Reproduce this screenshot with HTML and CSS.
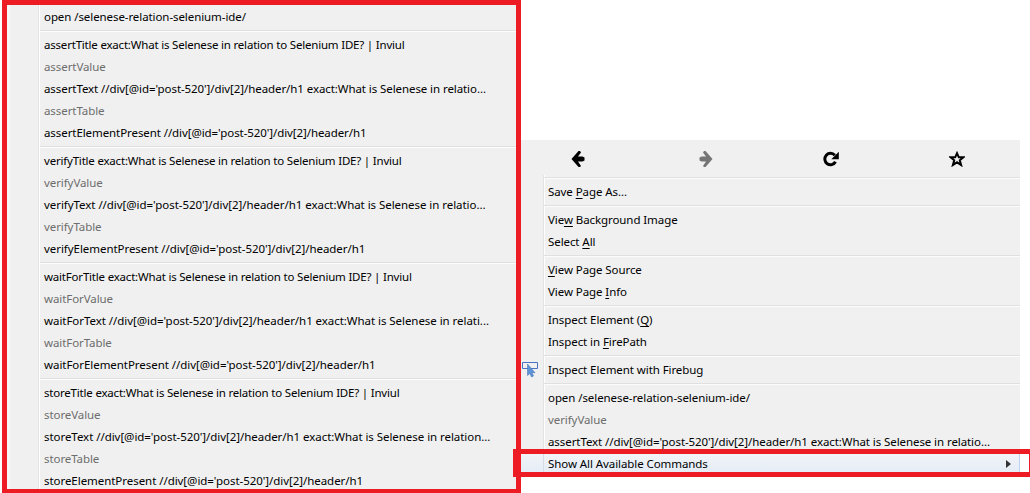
FILE: index.html
```html
<!DOCTYPE html>
<html lang="en">
<head>
<meta charset="utf-8">
<title>Context menu</title>
<link rel="stylesheet" href="styles.css">
</head>
<body>
<div class="page">
  <div class="panel">
    <div class="menu">
      <div class="row">open /selenese-relation-selenium-ide/</div>
      <div class="sep"></div>
      <div class="row title">assertTitle exact:What is Selenese in relation to Selenium IDE? | Inviul</div>
      <div class="row dim">assertValue</div>
      <div class="row">assertText //div[@id='post-520']/div[2]/header/h1 exact:What is Selenese in relatio...</div>
      <div class="row dim">assertTable</div>
      <div class="row">assertElementPresent //div[@id='post-520']/div[2]/header/h1</div>
      <div class="sep"></div>
      <div class="row title">verifyTitle exact:What is Selenese in relation to Selenium IDE? | Inviul</div>
      <div class="row dim">verifyValue</div>
      <div class="row wide">verifyText //div[@id='post-520']/div[2]/header/h1 exact:What is Selenese in relatio...</div>
      <div class="row dim">verifyTable</div>
      <div class="row wide">verifyElementPresent //div[@id='post-520']/div[2]/header/h1</div>
      <div class="sep"></div>
      <div class="row title">waitForTitle exact:What is Selenese in relation to Selenium IDE? | Inviul</div>
      <div class="row dim">waitForValue</div>
      <div class="row wide">waitForText //div[@id='post-520']/div[2]/header/h1 exact:What is Selenese in relati...</div>
      <div class="row dim">waitForTable</div>
      <div class="row wide">waitForElementPresent //div[@id='post-520']/div[2]/header/h1</div>
      <div class="sep"></div>
      <div class="row title">storeTitle exact:What is Selenese in relation to Selenium IDE? | Inviul</div>
      <div class="row dim">storeValue</div>
      <div class="row wide">storeText //div[@id='post-520']/div[2]/header/h1 exact:What is Selenese in relation...</div>
      <div class="row dim">storeTable</div>
      <div class="row wide">storeElementPresent //div[@id='post-520']/div[2]/header/h1</div>
    </div>
  </div>
  <div class="popup">
    <div class="toolbar">
      <svg class="tool" viewBox="0 0 16 16"><path d="M7.500 0 .5 8l7 8h1.500l1-1-3-4.500h4.500l2-1V6.500l-2-1H7L10 1.500 9 0z"/></svg>
      <svg class="tool off" viewBox="0 0 16 16"><path d="M8.500 0 15.500 8l-7 8H7l-1-1 3-4.500H4.500l-2-1V6.500l2-1H9L6 1.500 7 0z"/></svg>
      <svg class="tool" viewBox="0 0 16 16"><path class="ring" d="M12.500 10.800A5.700 5.700 0 1 1 11.800 4.300"/><path d="M15.800 .8V8.300H8.300z"/></svg>
      <svg class="tool" viewBox="0 0 16 16"><path class="star" d="M8 2.200 9.800 6.300H14.300L10.800 9.300 12.100 14 8 11.300 3.900 14 5.200 9.300 1.700 6.300H6.200z"/></svg>
    </div>
    <div class="menu short">
      <div class="sep first"></div>
      <div class="row">Save <u>P</u>age As...</div>
      <div class="sep"></div>
      <div class="row">Vie<u>w</u> Background Image</div>
      <div class="row">Select <u>A</u>ll</div>
      <div class="sep"></div>
      <div class="row"><u>V</u>iew Page Source</div>
      <div class="row">View Page <u>I</u>nfo</div>
      <div class="sep"></div>
      <div class="row">Inspect Element (<u>Q</u>)</div>
      <div class="row">Inspect in <u>F</u>irePath</div>
      <div class="sep"></div>
      <div class="row has-icon">
        <svg class="bug" viewBox="0 0 16 16"><path class="frame" d="M.5.5h15v6H.5z"/><path class="cursor" d="M5.500 2v11.500l2.500-2 1.500 3.500 2-1-1.500-3.300h3z"/></svg>
        Inspect Element with Firebug
      </div>
      <div class="sep"></div>
      <div class="row">open /selenese-relation-selenium-ide/</div>
      <div class="row dim">verifyValue</div>
      <div class="row">assertText //div[@id='post-520']/div[2]/header/h1 exact:What is Selenese in relatio...</div>
      <div class="row active">Show All Available Commands<span class="arrow"></span></div>
    </div>
  </div>
  <div class="callout"></div>
</div>
</body>
</html>
```
FILE: styles.css
```css
* { box-sizing: border-box; }
html, body { margin: 0; padding: 0; background: #fff; }
body { font-family: "Noto Sans", sans-serif; font-size: 11.5px; color: #000; }
.page { position: relative; width: 1030px; height: 493px; overflow: hidden; display: flex; align-items: flex-start; padding-left: 2px; }
.panel { width: 519px; height: 493px; border: 5px solid #ed1c24; border-bottom-width: 4px; overflow: hidden; background: #f0f0f0; flex: none; }
.menu { position: relative; padding-top: 1px; padding-left: 33px; background: linear-gradient(to right, #f7f7f7 0 3px, #f0f0f0 3px 31px, #e2e3e3 31px 32px, #fff 32px 33px, #f0f0f0 33px); }
.row { height: 22px; line-height: 22px; padding-left: 4px; white-space: nowrap; letter-spacing: -.08px; }
.row.title { letter-spacing: -.2px; }
.row.wide { letter-spacing: -.05px; }
.dim { color: #6d6d6d; }
.sep { height: 6px; padding: 2px 0; }
.sep::before { content: ""; display: block; height: 2px; background: linear-gradient(#e0e0e0 0 1px, #fcfcfc 1px); }
u { text-underline-offset: 2px; }
.popup { width: 499px; margin-top: 140px; background: #f0f0f0; flex: none; }
.toolbar { height: 37px; display: grid; grid-template-columns: repeat(4, 126px); margin-left: -5px; align-items: center; justify-items: center; }
.tool { width: 16px; height: 16px; fill: #000; }
.off { fill: #757575; }
.ring { fill: none; stroke: #000; stroke-width: 3; }
.star { fill: none; stroke: #000; stroke-width: 2; stroke-linejoin: miter; }
.short { padding-top: 0; padding-left: 23px; background: linear-gradient(to right, #f0f0f0 0 22px, #e2e3e3 22px 23px, #fff 23px 24px, #f0f0f0 24px); }
.sep.first { height: 6px; margin-top: -2px; }
.has-icon { position: relative; }
.bug { position: absolute; left: -22px; top: 3px; width: 16px; height: 16px; }
.frame { fill: none; stroke: #4a72c4; }
.cursor { fill: #5d93d6; stroke: #3f6fb0; stroke-width: .5; }
.short .active { position: relative; margin-left: -23px; padding-left: 27px; border-right: 1px solid #bcd2ee; background: linear-gradient(to right, transparent 22px, #d5dce6 22px 23px, transparent 23px), linear-gradient(#f2f5f9, #e3ebf5); }
.arrow { position: absolute; right: 8px; top: 7px; border-left: 5px solid #333; border-top: 4px solid transparent; border-bottom: 4px solid transparent; }
.callout { position: absolute; left: 513px; top: 449px; width: 517px; height: 28px; border: 5px solid #ed1c24; border-right-width: 1px; }
```
